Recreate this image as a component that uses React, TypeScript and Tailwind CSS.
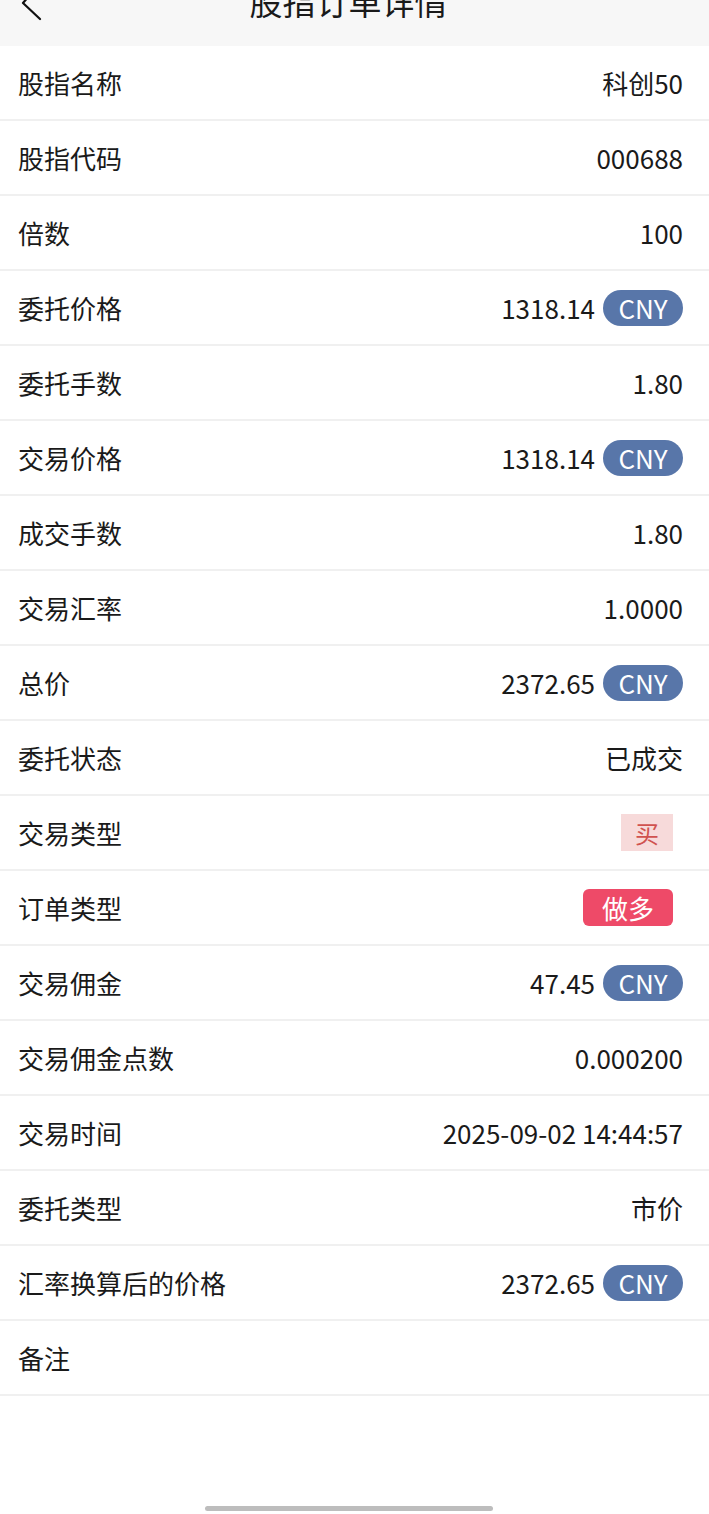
import React from "react";

type Row = { label: string; value?: string; badge?: "cny" | "buy" | "long" };

const rows: Row[] = [
  { label: "股指名称", value: "科创50" },
  { label: "股指代码", value: "000688" },
  { label: "倍数", value: "100" },
  { label: "委托价格", value: "1318.14", badge: "cny" },
  { label: "委托手数", value: "1.80" },
  { label: "交易价格", value: "1318.14", badge: "cny" },
  { label: "成交手数", value: "1.80" },
  { label: "交易汇率", value: "1.0000" },
  { label: "总价", value: "2372.65", badge: "cny" },
  { label: "委托状态", value: "已成交" },
  { label: "交易类型", badge: "buy" },
  { label: "订单类型", badge: "long" },
  { label: "交易佣金", value: "47.45", badge: "cny" },
  { label: "交易佣金点数", value: "0.000200" },
  { label: "交易时间", value: "2025-09-02 14:44:57" },
  { label: "委托类型", value: "市价" },
  { label: "汇率换算后的价格", value: "2372.65", badge: "cny" },
  { label: "备注" },
];

export default function App() {
  return (
    <div
      className="w-[709px] h-[1514px] bg-white relative overflow-hidden text-[#1a1a1a]"
      style={{ fontFamily: '"Noto Sans CJK SC", "Noto Sans", sans-serif' }}
    >
      <div className="h-[46px] bg-[#f7f7f7] relative overflow-hidden">
        <div className="h-[90px] -mt-[45px] flex items-center justify-center text-[33px] leading-none pt-[2px] pr-[12px]">
          股指订单详情
        </div>
        <svg className="absolute left-0 top-0" width="50" height="24" viewBox="0 0 50 24">
          <polyline points="29,-4 23,3 40,19" fill="none" stroke="#111" strokeWidth="2.2" strokeLinecap="round" strokeLinejoin="round" />
        </svg>
      </div>
      <div className="flex flex-col">
        {rows.map((r) => (
          <div
            key={r.label}
            className="h-[75px] flex items-center justify-between pl-[18px] pr-[26px] border-b-2 border-[#f0f0f0] text-[26px] leading-none"
          >
            <span>{r.label}</span>
            <div className="flex items-center gap-[8px]">
              {r.value && <span>{r.value}</span>}
              {r.badge === "cny" && (
                <span className="h-[36px] w-[80px] rounded-full bg-[#5876a9] text-white flex items-center justify-center text-[26px]">
                  CNY
                </span>
              )}
              {r.badge === "buy" && (
                <span className="h-[37px] w-[52px] mr-[10px] bg-[#f7dada] text-[#d0524f] flex items-center justify-center text-[24px]">
                  买
                </span>
              )}
              {r.badge === "long" && (
                <span className="h-[37px] w-[90px] mr-[10px] rounded-[6px] bg-[#ee4a68] text-white flex items-center justify-center text-[26px]">
                  做多
                </span>
              )}
            </div>
          </div>
        ))}
      </div>
      <div className="absolute left-[205px] top-[1506px] w-[288px] h-[5px] rounded-full bg-[#bdbdbd]" />
    </div>
  );
}
